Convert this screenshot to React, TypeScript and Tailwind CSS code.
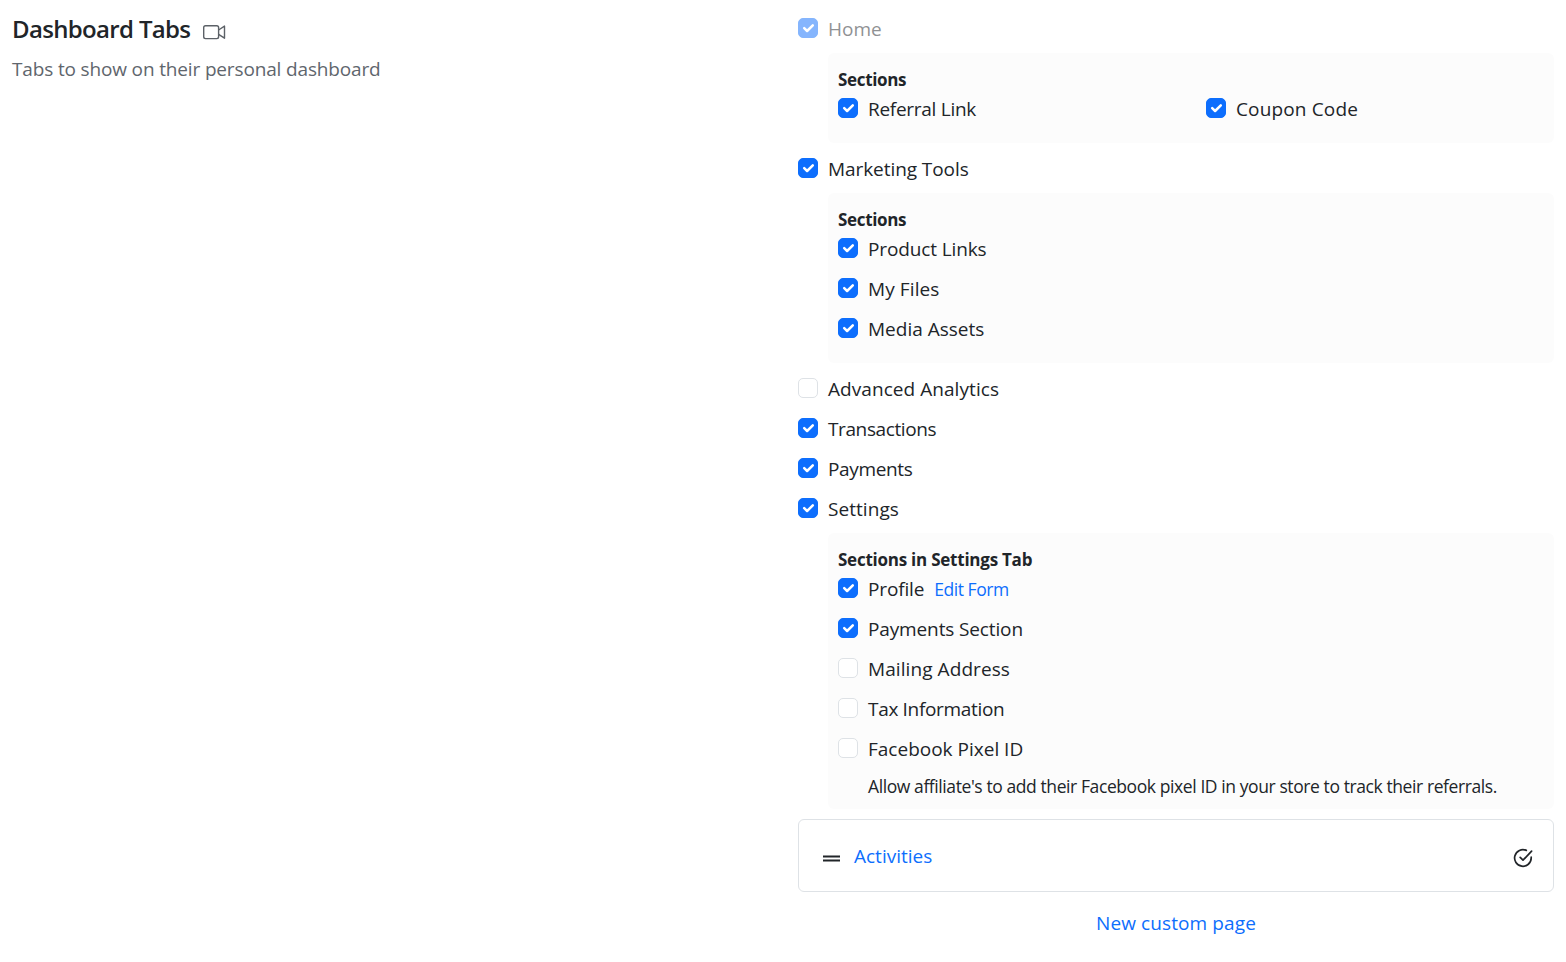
import type { ReactNode } from "react";

type CheckProps = {
  label: string;
  tracking?: string;
  checked?: boolean;
  disabled?: boolean;
  children?: ReactNode;
};

function Check({ label, tracking = "", checked = true, disabled = false, children }: CheckProps) {
  return (
    <div className={`flex h-5 items-center ${disabled ? "opacity-50" : ""}`}>
      <span
        role="checkbox"
        aria-checked={checked}
        aria-disabled={disabled}
        className={`flex size-5 shrink-0 items-center justify-center rounded-[5px] border ${
          checked ? "border-[#0d6efd] bg-[#0d6efd]" : "border-[#dee2e6] bg-white"
        }`}
      >
        {checked && (
          <svg viewBox="0 0 20 20" className="size-5 shrink-0" fill="none" stroke="#fff" strokeWidth="2.5" strokeLinecap="round" strokeLinejoin="round">
            <path d="m6.2 10.2 2.9 2.8 5.7-5.7" />
          </svg>
        )}
      </span>
      <span className={`ml-2.5 pt-0.5 text-[19px] leading-5 whitespace-nowrap ${tracking}`}>{label}</span>
      {children}
    </div>
  );
}

function Panel({ title, tracking, className, children }: { title: string; tracking: string; className: string; children: ReactNode }) {
  return (
    <section className={`mt-[15px] ml-[30px] rounded-md bg-[#fcfcfc] px-2.5 pt-[15px] ${className}`}>
      <h3 className={`mb-1.5 text-[17px] leading-6 font-bold ${tracking}`}>{title}</h3>
      {children}
    </section>
  );
}

export default function App() {
  return (
    <main className="flex min-h-[962px] bg-white px-3 font-['Open_Sans','Noto_Sans',sans-serif] text-[#212529]">
      <header className="w-[786px] pt-[11px]">
        <div className="flex h-9 items-center">
          <h1 className="w-[180px] text-[24px] leading-9 font-semibold tracking-[-0.66px] whitespace-nowrap">Dashboard Tabs</h1>
          <svg viewBox="0 0 24 16" className="mt-1.5 ml-2.5 h-4 w-6" fill="none" stroke="#5c6167" strokeWidth="1.4" strokeLinejoin="round">
            <rect x="1.7" y="1.7" width="14.9" height="12.9" rx="1.8" />
            <path d="m16.6 6 5.9-3.9v12.1l-5.9-3.9" />
          </svg>
        </div>
        <p className="mt-2 text-[19px] leading-7 tracking-[-0.15px] text-[#5f666d]">Tabs to show on their personal dashboard</p>
      </header>

      <div className="w-[756px] pt-[18px]">
        <Check label="Home" disabled />
        <Panel title="Sections" tracking="tracking-[-0.34px]" className="h-[90px]">
          <div className="grid grid-cols-[368px_1fr]">
            <Check label="Referral Link" tracking="tracking-[-0.28px]" />
            <Check label="Coupon Code" tracking="tracking-[0.15px]" />
          </div>
        </Panel>

        <div className="mt-[15px]">
          <Check label="Marketing Tools" tracking="tracking-[-0.07px]" />
        </div>
        <Panel title="Sections" tracking="tracking-[-0.34px]" className="h-[170px]">
          <div className="flex flex-col gap-5">
            <Check label="Product Links" tracking="tracking-[-0.12px]" />
            <Check label="My Files" tracking="tracking-[0.1px]" />
            <Check label="Media Assets" />
          </div>
        </Panel>

        <div className="mt-[15px] flex flex-col gap-5">
          <Check label="Advanced Analytics" tracking="tracking-[0.06px]" checked={false} />
          <Check label="Transactions" tracking="tracking-[-0.39px]" />
          <Check label="Payments" tracking="tracking-[-0.36px]" />
          <Check label="Settings" tracking="tracking-[0.06px]" />
        </div>
        <Panel title="Sections in Settings Tab" tracking="tracking-[-0.24px]" className="h-[276px]">
          <div className="flex flex-col gap-5">
            <Check label="Profile" tracking="tracking-[-0.15px]">
              <a className="ml-2.5 pt-px text-[17.5px] leading-5 tracking-[-0.46px] text-[#0d6efd]">Edit Form</a>
            </Check>
            <Check label="Payments Section" tracking="tracking-[-0.13px]" />
            <Check label="Mailing Address" tracking="tracking-[0.08px]" checked={false} />
            <Check label="Tax Information" tracking="tracking-[-0.32px]" checked={false} />
            <Check label="Facebook Pixel ID" checked={false} />
          </div>
          <p className="mt-4 ml-[30px] text-[17.5px] leading-6 tracking-[-0.41px] whitespace-nowrap">
            Allow affiliate's to add their Facebook pixel ID in your store to track their referrals.
          </p>
        </Panel>

        <div className="mt-2.5 flex h-[73px] items-center rounded-md border border-[#dee2e6] pr-5 pl-6">
          <svg viewBox="0 0 17 8" className="mt-1.5 h-2 w-[17px]" fill="#212529">
            <path d="M0 .5h17v2H0zM0 4.5h17v2H0z" />
          </svg>
          <a className="ml-3.5 text-[19px] leading-7 text-[#0d6efd]">Activities</a>
          <svg viewBox="0 0 20 20" className="mt-1 ml-auto size-5" fill="none" stroke="#212529" strokeWidth="1.7" strokeLinecap="round" strokeLinejoin="round">
            <path d="M18.2 9.2v.8a8.3 8.3 0 1 1-4.9-7.6" />
            <path d="m7.2 9.4 2.8 2.8 8.6-9" />
          </svg>
        </div>
        <div className="mt-[17px] text-center">
          <a className="text-[19px] leading-7 tracking-[0.1px] text-[#0d6efd]">New custom page</a>
        </div>
      </div>
    </main>
  );
}
